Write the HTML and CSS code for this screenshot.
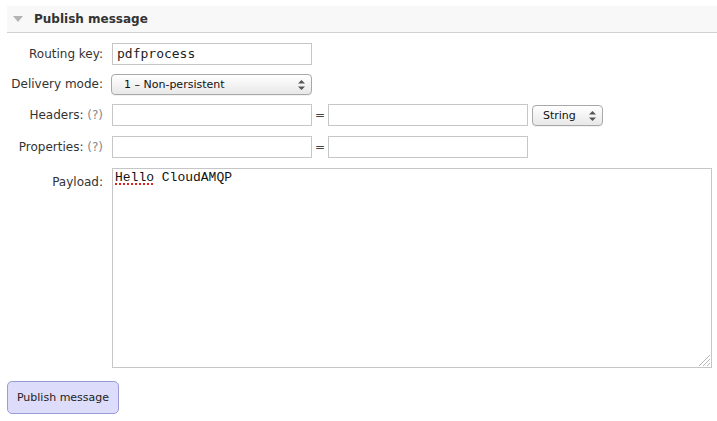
FILE: index.html
```html
<!DOCTYPE html>
<html>
<head>
<meta charset="utf-8">
<link rel="stylesheet" href="styles.css">
</head>
<body>
<div class="page">
  <div class="section-head">
    <svg class="toggle" width="10" height="6" viewBox="0 0 10 6"><polygon points="0,0 10,0 5,6" fill="#b4b4b4"/></svg>
    <span class="title">Publish message</span>
  </div>
  <div class="form">
    <div class="label">Routing key:</div>
    <div class="fields"><div class="input mono">pdfprocess</div></div>

    <div class="label">Delivery mode:</div>
    <div class="fields">
      <div class="select wide">1 – Non-persistent
        <svg class="arrows" width="7" height="10" viewBox="0 0 7 10"><polygon points="3.5,0 7,3.6 0,3.6" fill="#555"/><polygon points="3.5,10 7,6.4 0,6.4" fill="#555"/></svg>
      </div>
    </div>

    <div class="label">Headers: <span class="help">(?)</span></div>
    <div class="fields">
      <div class="input"></div><span class="eq">=</span><div class="input"></div>
      <div class="select small">String
        <svg class="arrows" width="7" height="10" viewBox="0 0 7 10"><polygon points="3.5,0 7,3.6 0,3.6" fill="#555"/><polygon points="3.5,10 7,6.4 0,6.4" fill="#555"/></svg>
      </div>
    </div>

    <div class="label">Properties: <span class="help">(?)</span></div>
    <div class="fields">
      <div class="input"></div><span class="eq">=</span><div class="input"></div>
    </div>

    <div class="label payload-label">Payload:</div>
    <div class="fields">
      <div class="textarea"><span class="misspelled">Hello</span> CloudAMQP
        <svg class="grip" width="12" height="12" viewBox="0 0 12 12"><g stroke="#b8b8b8" stroke-width="1"><line x1="12" y1="1" x2="1" y2="12"/><line x1="12" y1="5" x2="5" y2="12"/><line x1="12" y1="9" x2="9" y2="12"/></g></svg>
      </div>
    </div>
  </div>
  <div class="actions"><button class="btn">Publish message</button></div>
</div>
</body>
</html>
```
FILE: styles.css
```css
html, body {
  margin: 0;
  padding: 0;
  background: #fff;
}
body {
  font-family: "DejaVu Sans", Verdana, sans-serif;
  font-size: 12px;
  color: #333;
}
.page {
  padding: 6px 0 0 7px;
}
.section-head {
  height: 26px;
  background: #f8f8f8;
  border-bottom: 1px solid #d0d0d0;
  display: flex;
  align-items: center;
  padding-left: 6px;
}
.toggle {
  margin-right: 11px;
}
.title {
  font-weight: bold;
  font-size: 12px;
  color: #333;
}
.form {
  display: grid;
  grid-template-columns: 96px 1fr;
  grid-template-rows: 30px 31px 32px 32px 200px;
  column-gap: 9px;
  padding-top: 10px;
  align-items: start;
}
.label {
  text-align: right;
  line-height: 22px;
  color: #333;
}
.payload-label {
  padding-top: 3px;
}
.help {
  color: #888;
}
.fields {
  display: flex;
  align-items: center;
  height: 22px;
}
.input {
  box-sizing: border-box;
  width: 200px;
  height: 22px;
  border: 1px solid #c6c6c6;
  background: #fff;
}
.mono {
  font-family: "DejaVu Sans Mono", monospace;
  font-size: 13px;
  line-height: 20px;
  padding-left: 4px;
  color: #222;
}
.eq {
  width: 16px;
  text-align: center;
  color: #444;
}
.select {
  position: relative;
  box-sizing: border-box;
  height: 21px;
  border: 1px solid #a8a8a8;
  border-radius: 4px;
  background: linear-gradient(#ffffff, #f1f1f1 60%, #e8e8e8);
  font-size: 11px;
  line-height: 19px;
  color: #111;
  box-shadow: 0 1px 0 rgba(0,0,0,0.05);
}
.select.wide {
  width: 201px;
  margin-left: -1px;
  padding-left: 12px;
}
.select.small {
  width: 71px;
  margin-left: 4px;
  padding-left: 10px;
}
.arrows {
  position: absolute;
  right: 6px;
  top: 5px;
}
.textarea {
  position: relative;
  box-sizing: border-box;
  width: 600px;
  height: 200px;
  align-self: flex-start;
  border: 1px solid #c6c6c6;
  padding: 1px 0 0 2px;
  font-family: "Liberation Mono", "Courier New", monospace;
  font-size: 13px;
  line-height: 16px;
  color: #111;
}
.fields:last-child {
  height: 200px;
  align-items: flex-start;
}
.misspelled {
  text-decoration: underline dotted #e02020;
  text-decoration-thickness: 2px;
  text-underline-offset: 2px;
}
.grip {
  position: absolute;
  right: 1px;
  bottom: 1px;
}
.actions {
  padding-top: 13px;
}
.btn {
  box-sizing: border-box;
  width: 112px;
  height: 33px;
  background: #ddddfb;
  border: 1px solid #9a9ad8;
  border-radius: 5px;
  font-family: "DejaVu Sans", Verdana, sans-serif;
  font-size: 11px;
  color: #222;
  padding: 0;
}
```
